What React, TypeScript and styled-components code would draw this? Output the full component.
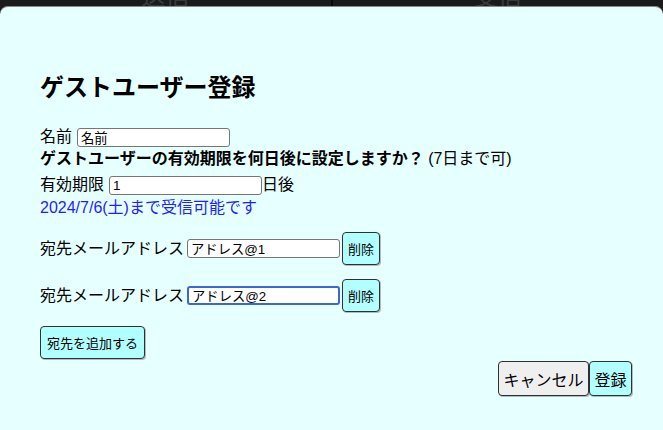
import styled, { createGlobalStyle } from "styled-components";

const GlobalStyle = createGlobalStyle`
  html, body {
    margin: 0;
    padding: 0;
    background: #1b1b1b;
  }
  body {
    font-family: "Liberation Sans", "Noto Sans CJK JP", sans-serif;
    color: #000;
  }
`;

const Screen = styled.div`
  width: 663px;
  height: 430px;
  overflow: hidden;
  display: flex;
  flex-direction: column;
  background: #1b1b1b;
`;

const TabBar = styled.div`
  height: 6px;
  overflow: hidden;
  display: flex;
  flex-shrink: 0;
`;

const Tab = styled.div<{ $divider?: boolean }>`
  flex: 1;
  display: flex;
  justify-content: center;
  border-right: ${(p) => (p.$divider ? "2px solid #0a0a0a" : "none")};
  font-family: "Noto Sans CJK JP", sans-serif;
  font-size: 24px;
  line-height: 24px;
  color: #3c3c3c;

  span {
    margin-top: -17px;
  }
`;

const Modal = styled.div`
  flex: 1;
  background: #e6ffff;
  border-top: 1px solid #8a8a8a;
  border-radius: 8px 8px 0 0;
  padding: 63px 31px 0 40px;
  display: flex;
  flex-direction: column;
`;

const Title = styled.h2`
  margin: 0 0 24px;
  font-family: "Noto Sans CJK JP", sans-serif;
  font-size: 24px;
  line-height: 32px;
  font-weight: 700;
`;

const Row = styled.div<{ $top?: number; $gap?: number }>`
  display: flex;
  align-items: center;
  min-height: 22px;
  margin-top: ${(p) => p.$top ?? 0}px;
  gap: ${(p) => p.$gap ?? 0}px;
  font-size: 16px;
  line-height: 22px;
`;

const Label = styled.span`
  white-space: nowrap;
`;

const Question = styled.div`
  font-size: 16px;
  line-height: 22px;

  b {
    font-weight: 700;
  }
`;

const Notice = styled.div`
  margin-top: 1px;
  font-size: 16px;
  line-height: 22px;
  color: #1e1eff;
`;

const TextInput = styled.input<{ $focused?: boolean }>`
  box-sizing: border-box;
  width: 153px;
  height: 19px;
  padding: 0 3px;
  margin: 0;
  background: #fff;
  border: ${(p) => (p.$focused ? "2px solid #3f64d6" : "1px solid #767676")};
  border-radius: 3px;
  font-family: "Liberation Sans", "Noto Sans CJK JP", sans-serif;
  font-size: 13.333px;
  color: #000;
  outline: none;
`;

const Button = styled.button<{ $tone?: "cyan" | "gray"; $big?: boolean }>`
  box-sizing: border-box;
  height: ${(p) => (p.$big ? 35 : 33)}px;
  padding: 0 ${(p) => (p.$big ? 4.5 : 6)}px;
  margin: 0;
  background: ${(p) => (p.$tone === "gray" ? "#efefef" : "#b2ffff")};
  border: 1.5px solid #303030;
  border-radius: 4px;
  box-shadow: 1px 1px 0 rgba(0, 0, 0, 0.25);
  font-family: "Noto Sans CJK JP", sans-serif;
  font-size: ${(p) => (p.$big ? 16 : 13)}px;
  line-height: 1;
  color: #000;
  cursor: pointer;
  white-space: nowrap;
`;

const AddressRow = styled.div<{ $top: number }>`
  display: flex;
  align-items: center;
  margin-top: ${(p) => p.$top}px;
  font-size: 16px;
  line-height: 22px;

  ${Label} {
    margin-right: 3px;
  }
  ${TextInput} {
    margin-right: 2px;
  }
  ${Button} {
    padding: 0 5px;
  }
`;

const AddRow = styled.div`
  margin-top: 14px;
  display: flex;
`;

const Footer = styled.div`
  margin-top: 2px;
  display: flex;
  justify-content: flex-end;
`;

const addresses = ["アドレス@1", "アドレス@2"];

export default function App() {
  return (
    <>
      <GlobalStyle />
      <Screen>
        <TabBar>
          <Tab $divider>
            <span>送信</span>
          </Tab>
          <Tab>
            <span>受信</span>
          </Tab>
        </TabBar>
        <Modal>
          <Title>ゲストユーザー登録</Title>
          <Row $gap={5}>
            <Label>名前</Label>
            <TextInput defaultValue="名前" />
          </Row>
          <Question>
            <b>ゲストユーザーの有効期限を何日後に設定しますか？</b> (7日まで可)
          </Question>
          <Row $top={4}>
            <Label>有効期限</Label>
            <TextInput defaultValue="1" style={{ marginLeft: 5 }} />
            <Label>日後</Label>
          </Row>
          <Notice>2024/7/6(土)まで受信可能です</Notice>
          {addresses.map((a, i) => (
            <AddressRow key={a} $top={i === 0 ? 13 : 14}>
              <Label>宛先メールアドレス</Label>
              <TextInput defaultValue={a} $focused={i === 1} />
              <Button $tone="cyan">削除</Button>
            </AddressRow>
          ))}
          <AddRow>
            <Button $tone="cyan">宛先を追加する</Button>
          </AddRow>
          <Footer>
            <Button $tone="gray" $big>
              キャンセル
            </Button>
            <Button $tone="cyan" $big>
              登録
            </Button>
          </Footer>
        </Modal>
      </Screen>
    </>
  );
}
